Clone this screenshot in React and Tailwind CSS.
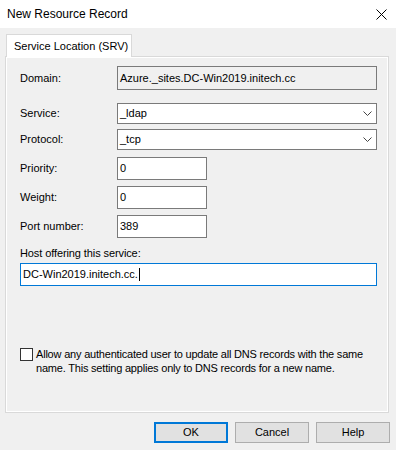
const Field = ({ label, value, width, height, top, readOnly, combo }) => (
  <div className={`flex items-center ${top}`}>
    <span className="w-[97px] shrink-0">{label}</span>
    <div
      className={`${width} ${height} border border-[#7a7a7a] flex items-center pl-[2px] pr-[4px] ${
        readOnly ? "bg-[#f0f0f0]" : "bg-white"
      }`}
    >
      <span className="flex-1">{value}</span>
      {combo && (
        <svg width="9" height="6" viewBox="0 0 9 6">
          <polyline points="0.5,0.5 4.5,4.5 8.5,0.5" fill="none" stroke="#444" strokeWidth="1" />
        </svg>
      )}
    </div>
  </div>
);

const Button = ({ children, primary }) => (
  <div
    className={`w-[74px] h-[21px] bg-[#e1e1e1] flex items-center justify-center ${
      primary ? "border-2 border-[#0078d7]" : "border border-[#adadad]"
    }`}
  >
    {children}
  </div>
);

export default function App() {
  return (
    <div className="w-[396px] h-[450px] bg-[#f0f0f0] text-black text-[11px] font-['Liberation_Sans',Arial,sans-serif] flex flex-col overflow-hidden">
      <div className="h-[28px] bg-white flex items-center justify-between pl-[7px] pr-[8px] shrink-0">
        <span className="text-[12px]">New Resource Record</span>
        <svg width="11" height="11" viewBox="0 0 11 11" className="mr-[1px]">
          <path d="M0.5 0.5 L10.5 10.5 M10.5 0.5 L0.5 10.5" stroke="#000" strokeWidth="1" />
        </svg>
      </div>

      <div className="pl-[5px] pt-[6px]">
        <div className="relative z-10 ml-[1px] w-[126px] h-[23px] bg-white border border-b-0 border-[#d9d9d9] flex items-center pl-[7px]">
          Service Location (SRV)
        </div>
        <div className="-mt-px w-[384px] h-[357px] border border-[#d9d9d9] shadow-[inset_1px_1px_0_#fff,inset_-1px_-1px_0_#fff] flex flex-col pl-[14px]">
          <Field label="Domain:" value="Azure._sites.DC-Win2019.initech.cc" width="w-[260px]" height="h-[24px]" top="mt-[9px]" readOnly />
          <Field label="Service:" value="_ldap" width="w-[260px]" height="h-[21px]" top="mt-[13px]" combo />
          <Field label="Protocol:" value="_tcp" width="w-[260px]" height="h-[21px]" top="mt-[5px]" combo />
          <Field label="Priority:" value="0" width="w-[90px]" height="h-[23px]" top="mt-[7px]" />
          <Field label="Weight:" value="0" width="w-[90px]" height="h-[23px]" top="mt-[6px]" />
          <Field label="Port number:" value="389" width="w-[90px]" height="h-[23px]" top="mt-[6px]" />

          <span className="mt-[9px] leading-[13px] tracking-[-0.1px]">Host offering this service:</span>
          <div className="mt-[3px] w-[357px] h-[23px] bg-white border border-[#0078d7] flex items-center pl-[2px]">
            <span>DC-Win2019.initech.cc.</span>
            <span className="w-px h-[13px] bg-black ml-[1px]" />
          </div>

          <div className="mt-[61px] flex items-start gap-[3px]">
            <div className="w-[13px] h-[13px] border border-[#333] bg-white shrink-0 mt-[1px]" />
            <p className="leading-[14px] w-[345px] tracking-[-0.2px]">
              Allow any authenticated user to update all DNS records with the same name. This setting applies only to DNS records for a new name.
            </p>
          </div>
        </div>
      </div>

      <div className="flex justify-end gap-[7px] pr-[6px] mt-[9px]">
        <Button primary>OK</Button>
        <Button>Cancel</Button>
        <Button>Help</Button>
      </div>
    </div>
  );
}
